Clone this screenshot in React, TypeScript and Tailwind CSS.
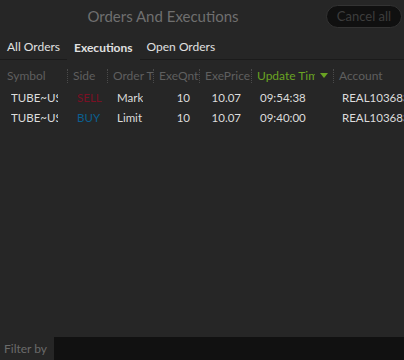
import React from "react";

const cols = [
  { label: "Symbol", w: "w-[67px]" },
  { label: "Side", w: "w-[40px]" },
  { label: "Order Type", w: "w-[46px]" },
  { label: "ExeQnty", w: "w-[46px]" },
  { label: "ExePrice", w: "w-[52px]" },
  { label: "Update Time", w: "w-[82px]", sorted: true },
  { label: "Account", w: "w-[71px]" },
];

const rows = [
  { symbol: "TUBE~US", side: "SELL", type: "Market", qty: "10", price: "10.07", time: "09:54:38", account: "REAL1036839" },
  { symbol: "TUBE~US", side: "BUY", type: "Limit", qty: "10", price: "10.07", time: "09:40:00", account: "REAL1036839" },
];

export default function App() {
  return (
    <div className="w-[404px] h-[360px] bg-[#262626] flex flex-col overflow-hidden font-['Lato','Noto_Sans',sans-serif] select-none">
      <div className="relative h-[33px] flex items-center justify-center">
        <span className="text-[15px] text-[#6f6f6f] ml-[-78px]">Orders And Executions</span>
        <button className="absolute right-[2px] top-[5px] h-[23px] w-[76px] rounded-full bg-[#101010] border border-[#333] text-[13px] text-[#3d3d3d]">
          Cancel all
        </button>
      </div>

      <div className="flex h-[27px] text-[12px] text-[#e0e0e0]">
        <div className="flex items-center pt-[2px] pl-[7px] pr-[7px] border-b border-[#1b1b1b]">All Orders</div>
        <div className="flex items-center pt-[2px] px-[7px] font-bold">Executions</div>
        <div className="flex-1 flex items-center pt-[2px] pl-[7px] border-b border-[#1b1b1b]">Open Orders</div>
      </div>

      <div className="flex h-[28px] pt-[3px] items-center text-[12px] text-[#5f5f5f] whitespace-nowrap">
        {cols.map((c, i) => (
          <div key={c.label} className={`${c.w} shrink-0 flex items-center h-[14px] overflow-hidden ${i > 0 ? "border-l border-dotted border-[#4a4a4a]" : ""}`}>
            <span className={`flex-1 overflow-hidden ${i === 0 ? "pl-[7px]" : "pl-[5px]"} ${c.sorted ? "text-[#6aa323]" : ""}`}>
              {c.label}
            </span>
            {c.sorted && (
              <svg width="8" height="5" viewBox="0 0 8 5" className="mx-[5px] shrink-0">
                <path d="M0 0h8L4 5z" fill="#6aa323" />
              </svg>
            )}
          </div>
        ))}
      </div>

      <div className="flex flex-col text-[11.5px] text-[#dcdcdc] whitespace-nowrap">
        {rows.map((r, i) => (
          <div key={i} className="flex h-[20px] items-center">
            <div className="w-[67px] shrink-0 pl-[11px] pr-[9px]">
              <div className="overflow-hidden">{r.symbol}</div>
            </div>
            <div className={`w-[40px] shrink-0 pl-[10px] overflow-hidden ${r.side === "SELL" ? "text-[#7a1024]" : "text-[#0b5e8f]"}`}>
              {r.side}
            </div>
            <div className="w-[46px] shrink-0 pl-[10px] pr-[10px]">
              <div className="overflow-hidden">{r.type}</div>
            </div>
            <div className="w-[46px] shrink-0 pr-[9px] text-right">{r.qty}</div>
            <div className="w-[52px] shrink-0 pr-[10px] text-right">{r.price}</div>
            <div className="w-[82px] shrink-0 pl-[9px]">{r.time}</div>
            <div className="w-[71px] shrink-0 pl-[9px] overflow-hidden">{r.account}</div>
          </div>
        ))}
      </div>

      <div className="flex-1" />

      <div className="flex h-[23px] items-center">
        <span className="w-[54px] pl-[4px] text-[12px] text-[#6a6a6a]">Filter by</span>
        <div className="flex-1 h-full bg-[#111111]" />
      </div>
    </div>
  );
}
